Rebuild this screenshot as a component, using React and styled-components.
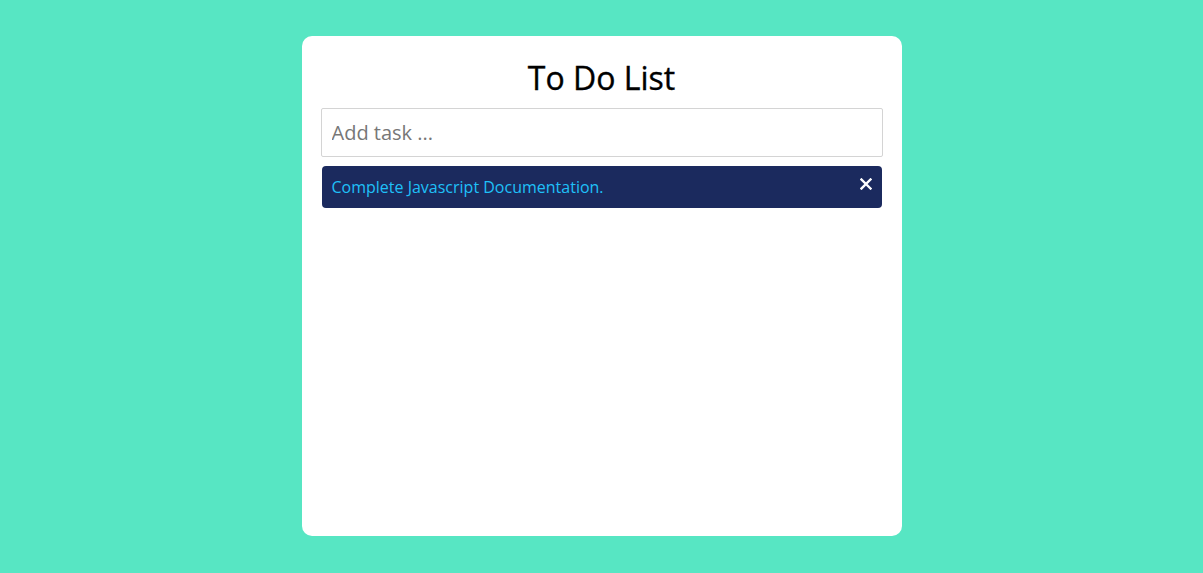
import React, { useState } from "react";
import styled, { createGlobalStyle } from "styled-components";

const GlobalStyle = createGlobalStyle`
  html, body {
    margin: 0;
    padding: 0;
    background-color: #57e6c3;
    font-family: "Open Sans", "Noto Sans", sans-serif;
  }
  * {
    box-sizing: border-box;
  }
`;

const Page = styled.div`
  display: flex;
  justify-content: center;
  padding-top: 36px;
  min-height: 100vh;
`;

const Card = styled.div`
  width: 600px;
  height: 500px;
  background-color: #fff;
  border-radius: 10px;
  padding: 20px 19px;
  display: flex;
  flex-direction: column;
`;

const Title = styled.h1`
  margin: 0 0 8px;
  font-size: 32px;
  font-weight: 500;
  color: #000;
  text-align: center;
  line-height: 44px;
  -webkit-text-stroke: 0.35px #000;
`;

const TaskInput = styled.input`
  width: 100%;
  height: 49px;
  padding: 0 10px;
  border: 1px solid #d4d4d4;
  border-radius: 2px;
  font-family: inherit;
  font-size: 20px;
  color: #333;
  outline: none;

  &::placeholder {
    color: #777;
  }
`;

const List = styled.ul`
  list-style: none;
  margin: 9px 1px 0;
  padding: 0;
  display: flex;
  flex-direction: column;
  gap: 8px;
`;

const Item = styled.li`
  height: 42px;
  display: flex;
  align-items: center;
  justify-content: space-between;
  padding: 0 10px;
  background-color: #1b2a5e;
  border-radius: 4px;
  color: #1fc0f8;
  font-size: 16px;
`;

const RemoveButton = styled.button`
  border: none;
  background: none;
  padding: 0;
  margin: 0 0 6px;
  width: 12px;
  height: 12px;
  display: flex;
  cursor: pointer;
`;

const Close = () => (
  <svg width="12" height="12" viewBox="0 0 12 12">
    <path d="M1.5 1.5 L10.5 10.5 M10.5 1.5 L1.5 10.5" stroke="#fff" strokeWidth="2.4" strokeLinecap="square" />
  </svg>
);

const App = () => {
  const [tasks, setTasks] = useState(["Complete Javascript Documentation."]);
  const [text, setText] = useState("");

  const addTask = (e) => {
    if (e.key === "Enter" && text.trim()) {
      setTasks([...tasks, text.trim()]);
      setText("");
    }
  };

  return (
    <>
      <GlobalStyle />
      <Page>
        <Card>
          <Title>To Do List</Title>
          <TaskInput
            placeholder="Add task ..."
            value={text}
            onChange={(e) => setText(e.target.value)}
            onKeyDown={addTask}
          />
          <List>
            {tasks.map((task, i) => (
              <Item key={i}>
                {task}
                <RemoveButton onClick={() => setTasks(tasks.filter((_, j) => j !== i))}>
                  <Close />
                </RemoveButton>
              </Item>
            ))}
          </List>
        </Card>
      </Page>
    </>
  );
};

export default App;
